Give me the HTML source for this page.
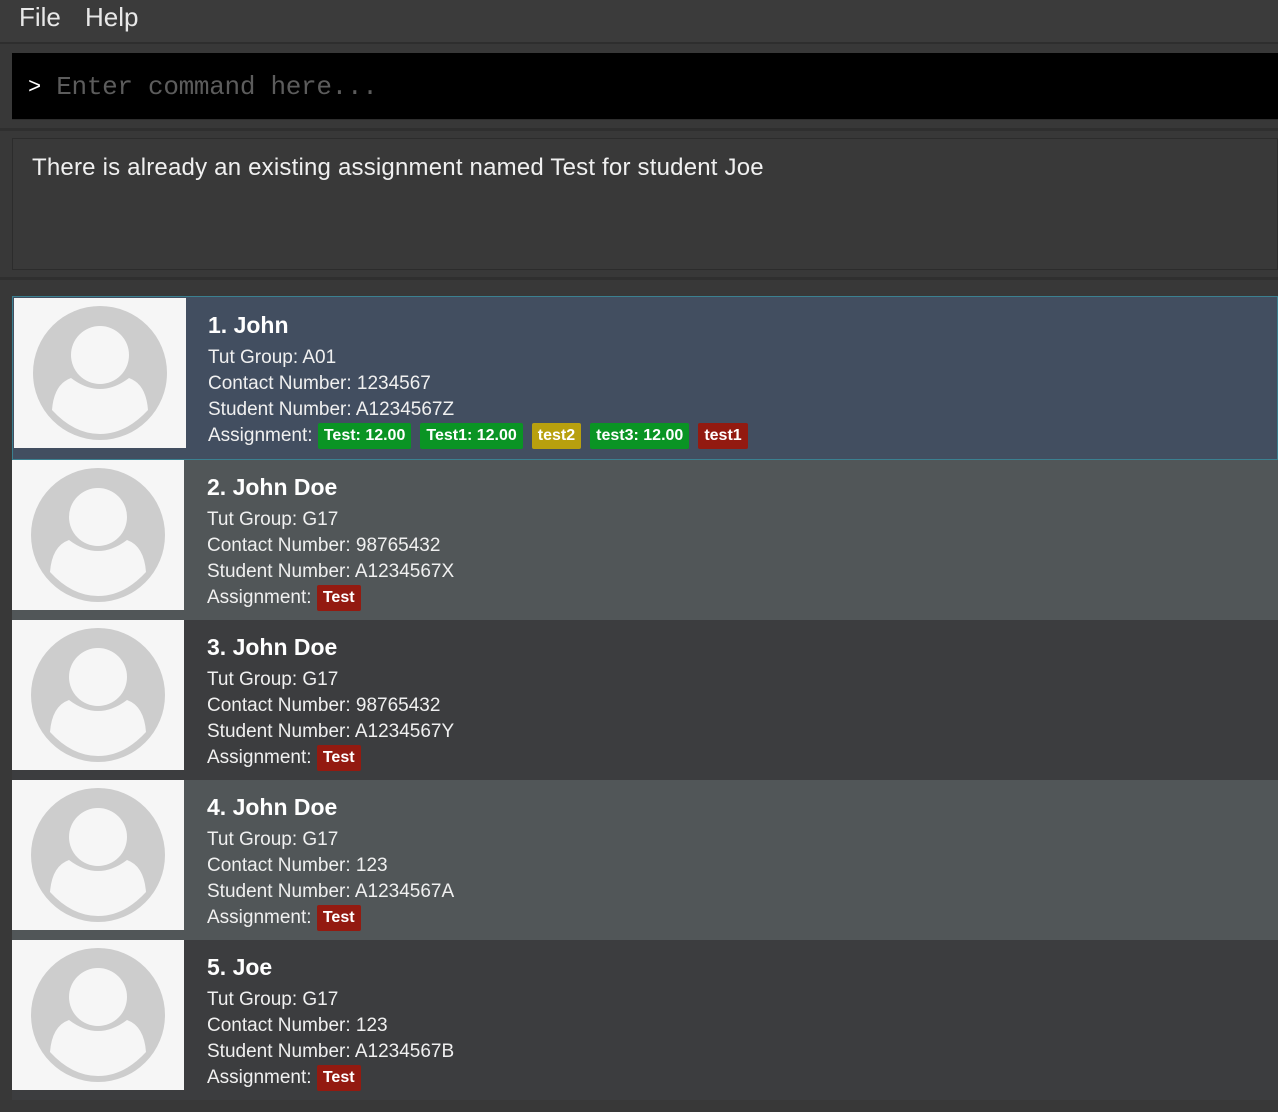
<!DOCTYPE html>
<html><head><meta charset="utf-8">
<style>
*{margin:0;padding:0;box-sizing:border-box}
body{width:1278px;height:1112px;background:#383838;font-family:"Segoe UI","Liberation Sans",sans-serif;color:#fff;position:relative;overflow:hidden}
.menu{position:absolute;left:0;top:0;width:1278px;height:44px;background:#3b3b3b;border-bottom:2px solid #2e2e2e}
.menu span{position:absolute;top:2px;font-size:26px;color:#e8e8e8}
.cmd{position:absolute;left:12px;top:53px;width:1266px;height:67px;background:#000;border-bottom:1px solid #2e2e2e}
.cmd span{position:absolute;left:16px;top:19px;font-family:"Liberation Mono",monospace;font-size:26px;color:#5c5c5c;letter-spacing:-0.3px}
.cmd b{color:#fff;font-weight:normal;font-size:22px;position:relative;top:-1px}
.sep{position:absolute;left:0;width:1278px;height:3px;background:#2f2f2f}
.res{position:absolute;left:12px;top:138px;width:1266px;height:132px;border:1px solid #2c2c2c;background:#393939}
.res span{position:absolute;left:19px;top:15px;font-size:24px;color:#f0f0f0;letter-spacing:0.2px}
.cell{position:absolute;left:12px;width:1266px;height:160px}
.cell svg{position:absolute;left:0;top:0}
.t{position:absolute;left:195px;font-size:19px;color:#f0f0f0;white-space:nowrap}
.n{font-size:23px;font-weight:bold;color:#fff}
.tag{display:inline-block;font-size:16px;color:#fff;padding:0 6px;height:26px;line-height:26px;border-radius:2px;margin-right:9px;font-weight:bold;vertical-align:middle}
.g{background:#0a9424}.y{background:#b8a00e}.r{background:#931a10}
</style></head><body>
<div class="menu"><span style="left:19px">File</span><span style="left:85px">Help</span></div>
<div class="cmd"><span><b>&gt;</b> Enter command here...</span></div>
<div class="sep" style="top:128px"></div>
<div class="res"><span>There is already an existing assignment named Test for student Joe</span></div>
<div class="sep" style="top:277px"></div>

<svg width="0" height="0" style="position:absolute"><defs>
<g id="av"><rect width="172" height="150" fill="#f6f6f6"/><circle cx="86" cy="75" r="67" fill="#cdcdcd"/><circle cx="86" cy="57" r="29" fill="#f6f6f6"/><path d="M38 112 Q40 86 57 80 Q86 102 115 80 Q132 86 134 112 Q112 136 86 136 Q60 136 38 112Z" fill="#f6f6f6"/></g>
</defs></svg>

<div class="cell" style="top:296px;height:164px;background:#424e60;border:1px solid #3b8090">
<svg width="172" height="150" style="left:1px;top:1px"><use href="#av"/></svg>
<div class="t n" style="top:15px">1. John</div>
<div class="t" style="top:50px">Tut Group: A01</div>
<div class="t" style="top:76px">Contact Number: 1234567</div>
<div class="t" style="top:102px">Student Number: A1234567Z</div>
<div class="t" style="top:126px">Assignment: <span class="tag g">Test: 12.00</span><span class="tag g">Test1: 12.00</span><span class="tag y">test2</span><span class="tag g">test3: 12.00</span><span class="tag r">test1</span></div>
</div>

<div class="cell" style="top:460px;background:#515658">
<svg width="172" height="150"><use href="#av"/></svg>
<div class="t n" style="top:14px">2. John Doe</div>
<div class="t" style="top:49px">Tut Group: G17</div>
<div class="t" style="top:75px">Contact Number: 98765432</div>
<div class="t" style="top:101px">Student Number: A1234567X</div>
<div class="t" style="top:125px">Assignment: <span class="tag r">Test</span></div>
</div>

<div class="cell" style="top:620px;background:#3c3d3f">
<svg width="172" height="150"><use href="#av"/></svg>
<div class="t n" style="top:14px">3. John Doe</div>
<div class="t" style="top:49px">Tut Group: G17</div>
<div class="t" style="top:75px">Contact Number: 98765432</div>
<div class="t" style="top:101px">Student Number: A1234567Y</div>
<div class="t" style="top:125px">Assignment: <span class="tag r">Test</span></div>
</div>

<div class="cell" style="top:780px;background:#515658">
<svg width="172" height="150"><use href="#av"/></svg>
<div class="t n" style="top:14px">4. John Doe</div>
<div class="t" style="top:49px">Tut Group: G17</div>
<div class="t" style="top:75px">Contact Number: 123</div>
<div class="t" style="top:101px">Student Number: A1234567A</div>
<div class="t" style="top:125px">Assignment: <span class="tag r">Test</span></div>
</div>

<div class="cell" style="top:940px;background:#3c3d3f">
<svg width="172" height="150"><use href="#av"/></svg>
<div class="t n" style="top:14px">5. Joe</div>
<div class="t" style="top:49px">Tut Group: G17</div>
<div class="t" style="top:75px">Contact Number: 123</div>
<div class="t" style="top:101px">Student Number: A1234567B</div>
<div class="t" style="top:125px">Assignment: <span class="tag r">Test</span></div>
</div>
</body></html>
